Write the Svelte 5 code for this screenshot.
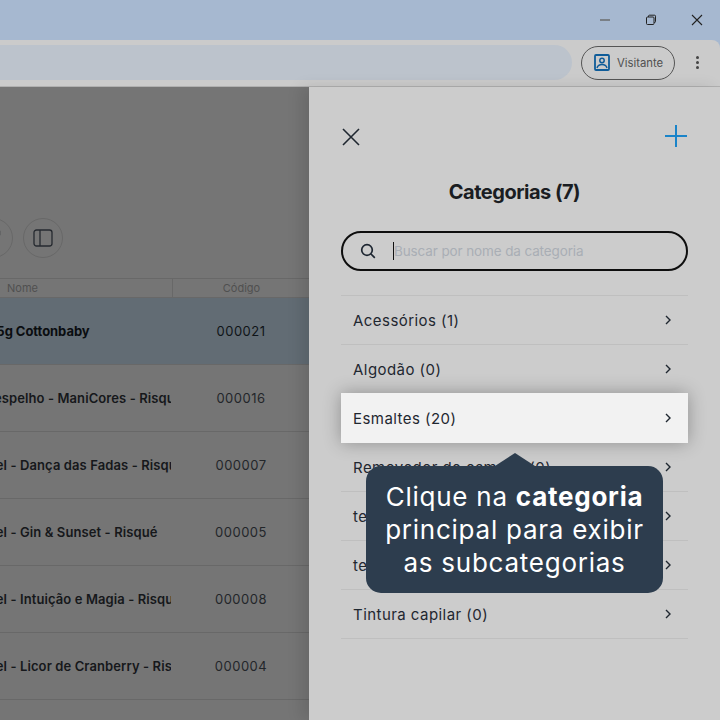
<script>
  const products = [
    { name: 'Esmalte Rosa 5g Cottonbaby', code: '000021', active: true },
    { name: 'Kit. Unhas c/ espelho - ManiCores - Risqué', code: '000016' },
    { name: 'Esmalte em Gel - Dança das Fadas - Risqué', code: '000007' },
    { name: 'Esmalte em Gel - Gin & Sunset - Risqué', code: '000005' },
    { name: 'Esmalte em Gel - Intuição e Magia - Risqué', code: '000008' },
    { name: 'Esmalte em Gel - Licor de Cranberry - Risqué', code: '000004' }
  ];

  const categories = [
    { label: 'Acessórios (1)' },
    { label: 'Algodão (0)' },
    { label: 'Esmaltes (20)', spotlight: true },
    { label: 'Removedor de esmalte (0)' },
    { label: 'teste (0)' },
    { label: 'teste 2 (0)' },
    { label: 'Tintura capilar (0)' }
  ];
</script>

<div class="window">
  <header class="titlebar">
    <svg class="winicon" viewBox="0 0 12 12"><path d="M1 6h10" stroke="#666" stroke-width="1.4" /></svg>
    <svg class="winicon" viewBox="0 0 12 12" fill="none" stroke="#222" stroke-width="1"><rect x="1.5" y="3" width="7.5" height="7.5" rx="1" /><path d="M3.5 3V2.2q0-1 1-1h5q1 0 1 1v5.300q0 1-1 1H9" /></svg>
    <svg class="winicon" viewBox="0 0 12 12"><path d="M1 1l10 10M11 1L1 11" stroke="#222" stroke-width="1.100" /></svg>
  </header>

  <div class="toolbar">
    <div class="address"></div>
    <div class="profile">
      <svg width="16" height="17" viewBox="0 0 16 17" fill="none">
        <rect x="1" y="1" width="14" height="15" rx="1" stroke="#0f5c99" stroke-width="1.800" />
        <circle cx="8" cy="6.500" r="2.200" stroke="#0f5c99" stroke-width="1.500" />
        <path d="M3 14c.8-2.600 2.500-3.400 5-3.400s4.200.8 5 3.400" stroke="#0f5c99" stroke-width="1.500" />
      </svg>
      <span>Visitante</span>
    </div>
    <div class="kebab"><i></i><i></i><i></i></div>
  </div>

  <main class="content">
    <section class="listing">
      <div class="actions">
        <div class="circle">
          <svg class="tool" width="8" height="8" viewBox="0 0 8 8" fill="none"><path d="M1 1.500h5.500v3H4.500V7" stroke="#262a30" stroke-width="1.400" /></svg>
        </div>
        <div class="circle">
          <svg width="20" height="18" viewBox="0 0 20 18" fill="none">
            <rect x="1" y="1" width="18" height="16" rx="2.500" stroke="#262a30" stroke-width="1.300" />
            <path d="M7 1v16" stroke="#262a30" stroke-width="1.300" />
          </svg>
        </div>
      </div>

      <div class="thead">
        <div class="col-name">Nome</div>
        <div class="col-code">Código</div>
      </div>

      {#each products as product}
        <div class="row" class:active={product.active}>
          <div class="col-name"><span>{product.name}</span></div>
          <div class="col-code">{product.code}</div>
        </div>
      {/each}
    </section>

    <aside class="panel">
      <div class="panel-top">
        <svg width="20" height="20" viewBox="0 0 20 20"><path d="M2 2l16 16M18 2L2 18" stroke="#1f2730" stroke-width="1.600" /></svg>
        <svg class="plus" width="24" height="24" viewBox="0 0 24 24"><path d="M12 1v22M1 12h22" stroke="#1a84c9" stroke-width="2" /></svg>
      </div>

      <h2>Categorias (7)</h2>

      <div class="search">
        <svg width="16" height="16" viewBox="0 0 16 16" fill="none" stroke="#1c2530" stroke-width="1.700">
          <circle cx="7" cy="7" r="5.300" />
          <path d="M11 11l3.800 3.800" />
        </svg>
        <div class="input"><span class="caret"></span>Buscar por nome da categoria</div>
      </div>

      <ul>
        {#each categories as cat}
          <li class:spotlight={cat.spotlight}>
            <span>{cat.label}</span>
            <svg width="8" height="10" viewBox="0 0 8 10" fill="none"><path d="M2 1l4 4-4 4" stroke="#1f2730" stroke-width="1.400" /></svg>
          </li>
        {/each}
      </ul>

      <div class="tip">
        Clique na <b>categoria</b><br />principal para exibir<br />as subcategorias
      </div>
    </aside>
  </main>
</div>

<style>
  :global(body) {
    margin: 0;
    overflow: hidden;
  }

  .window {
    width: 720px;
    height: 720px;
    overflow: hidden;
    display: flex;
    flex-direction: column;
    background: #a6b8d0;
    font-family: Inter, "Liberation Sans", sans-serif;
  }

  .titlebar {
    height: 40px;
    flex: none;
    display: flex;
    align-items: center;
    justify-content: flex-end;
    gap: 34px;
    padding-right: 17px;
    box-sizing: border-box;
  }

  .winicon {
    width: 12px;
    height: 12px;
  }

  .toolbar {
    height: 47px;
    flex: none;
    box-sizing: border-box;
    display: flex;
    align-items: center;
    background: #cbcbcb;
    border-top-right-radius: 8px;
    border-bottom: 1px solid #b0b0b0;
    padding-bottom: 1px;
  }

  .address {
    flex: 1;
    height: 35px;
    margin-left: -20px;
    border-radius: 18px;
    background: #bcc3cc;
  }

  .profile {
    margin-left: 9px;
    width: 94px;
    height: 34px;
    box-sizing: border-box;
    border: 1px solid #555;
    border-radius: 17px;
    display: flex;
    align-items: center;
    gap: 7px;
    padding-left: 12px;
    font-size: 11.3px;
    color: #505050;
  }

  .kebab {
    width: 45px;
    display: flex;
    flex-direction: column;
    align-items: center;
    gap: 2px;
  }

  .kebab i {
    width: 3px;
    height: 3px;
    border-radius: 50%;
    background: #444;
  }

  .content {
    flex: 1;
    display: flex;
    min-height: 0;
  }

  .listing {
    width: 309px;
    flex: none;
    overflow: hidden;
    background: #757575;
    padding-top: 131px;
    box-sizing: border-box;
  }

  .actions {
    display: flex;
    gap: 10px;
    margin-left: -27px;
    margin-bottom: 20px;
  }

  .circle {
    position: relative;
    width: 40px;
    height: 40px;
    box-sizing: border-box;
    border: 1px solid #686868;
    border-radius: 50%;
    display: flex;
    align-items: center;
    justify-content: center;
  }

  .tool {
    position: absolute;
    right: 11px;
    top: 11px;
  }

  .thead,
  .row {
    display: flex;
    margin-left: -91px;
  }

  .thead {
    height: 20px;
    box-sizing: border-box;
    border-top: 1px solid #686868;
    border-bottom: 1px solid #686868;
    align-items: center;
    font-size: 11px;
    color: #505050;
  }

  .thead .col-name {
    height: 100%;
    line-height: 18px;
    width: 264px;
    padding-left: 98px;
    border-right: 1px solid #686868;
  }

  .thead .col-code {
    width: 137px;
  }

  .col-name {
    width: 263px;
    box-sizing: border-box;
    flex: none;
    overflow: hidden;
    white-space: nowrap;
  }

  .col-code {
    width: 138px;
    flex: none;
    text-align: center;
  }

  .row {
    height: 67px;
    box-sizing: border-box;
    align-items: center;
    border-bottom: 1px solid #686868;
    font-size: 13px;
    color: #23262a;
    letter-spacing: 0.5px;
  }

  .row .col-name {
    font-weight: 600;
    color: #16181b;
    letter-spacing: 0.1px;
    width: 262px;
    margin-right: 1px;
  }

  .row.active {
    background: #626c74;
    color: #0f1418;
  }

  .row.active .col-name {
    font-weight: 700;
    color: #0a0d10;
    letter-spacing: -0.05px;
  }

  .panel {
    position: relative;
    flex: 1;
    background: #cccccc;
    box-shadow: -8px 0 14px rgba(0, 0, 0, 0.1);
    padding: 39px 32px 0;
  }

  .panel-top {
    display: flex;
    justify-content: space-between;
    align-items: center;
  }

  .plus {
    margin-top: -2px;
  }

  h2 {
    margin: 0;
    padding-top: 32px;
    font-size: 20px;
    line-height: 24px;
    font-weight: 700;
    letter-spacing: -0.5px;
    text-align: center;
    color: #1a1d22;
  }

  .search {
    margin-top: 27px;
    height: 40px;
    box-sizing: border-box;
    border: 2px solid #0e0e0e;
    border-radius: 20px;
    display: flex;
    align-items: center;
    gap: 16px;
    padding-left: 17px;
  }

  .input {
    display: flex;
    align-items: center;
    font-size: 13.5px;
    letter-spacing: -0.12px;
    color: #a9aeb5;
    margin-left: 1px;
  }

  .caret {
    width: 1px;
    height: 18px;
    background: #111;
  }

  ul {
    list-style: none;
    margin: 24px 0 0;
    padding: 0;
    border-top: 1px solid #bfbfbf;
  }

  li {
    height: 49px;
    box-sizing: border-box;
    border-bottom: 1px solid #bfbfbf;
    display: flex;
    align-items: center;
    justify-content: space-between;
    padding: 0 16px 0 12px;
    font-size: 15px;
    letter-spacing: 0.45px;
    color: #1f2730;
  }

  li.spotlight {
    height: 50px;
    margin-top: -1px;
    background: #f2f2f2;
    border-bottom: none;
    box-shadow: 0 0 18px rgba(0, 0, 0, 0.3);
    position: relative;
  }

  .tip {
    position: absolute;
    left: 57px;
    top: 379px;
    width: 297px;
    height: 127px;
    box-sizing: border-box;
    padding-top: 14px;
    background: #2d3d4e;
    border-radius: 15px;
    color: #fff;
    text-align: center;
    font-size: 26px;
    line-height: 33px;
    letter-spacing: 0.75px;
  }

  .tip::before {
    content: '';
    position: absolute;
    left: 50%;
    top: -13px;
    width: 0;
    height: 0;
    margin-left: -20px;
    border-left: 20px solid transparent;
    border-right: 20px solid transparent;
    border-bottom: 13px solid #2d3d4e;
  }

  .tip b {
    font-weight: 700;
  }
</style>
